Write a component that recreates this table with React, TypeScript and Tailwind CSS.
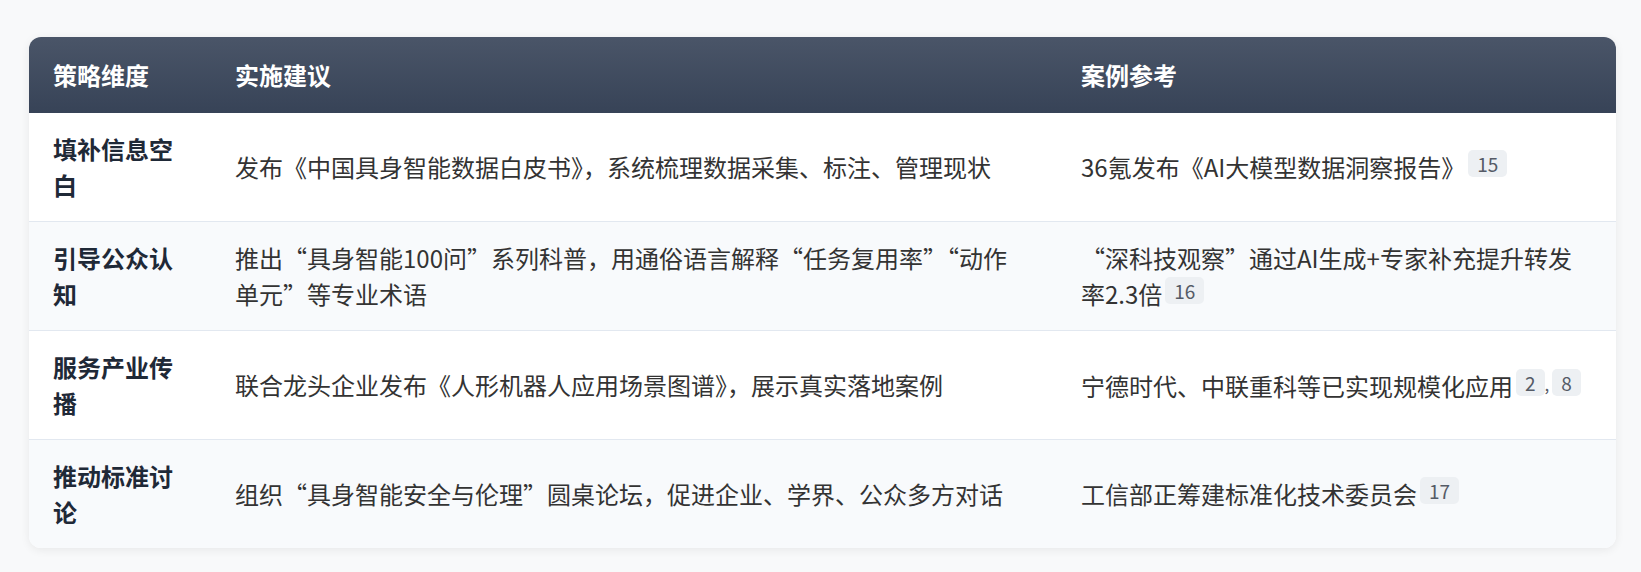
import { FC, ReactNode } from 'react';

type Row = {
  dimension: string;
  advice: string;
  example: ReactNode;
};

const Cite: FC<{ n: number }> = ({ n }) => (
  <span className="ml-[3px] inline-block rounded-[5px] bg-[#edf0f3] px-[9px] align-[5px] text-[19px] leading-[27px] text-[#555b66]">
    {n}
  </span>
);

const rows: Row[] = [
  {
    dimension: '填补信息空白',
    advice: '发布《中国具身智能数据白皮书》，系统梳理数据采集、标注、管理现状',
    example: (
      <>
        36氪发布《AI大模型数据洞察报告》
        <Cite n={15} />
      </>
    ),
  },
  {
    dimension: '引导公众认知',
    advice: '推出“具身智能100问”系列科普，用通俗语言解释“任务复用率”“动作单元”等专业术语',
    example: (
      <>
        “深科技观察”通过AI生成+专家补充提升转发率2.3倍
        <Cite n={16} />
      </>
    ),
  },
  {
    dimension: '服务产业传播',
    advice: '联合龙头企业发布《人形机器人应用场景图谱》，展示真实落地案例',
    example: (
      <>
        宁德时代、中联重科等已实现规模化应用
        <Cite n={2} />
        <span className="align-[5px] text-[17px] text-[#555b66]">,</span>
        <Cite n={8} />
      </>
    ),
  },
  {
    dimension: '推动标准讨论',
    advice: '组织“具身智能安全与伦理”圆桌论坛，促进企业、学界、公众多方对话',
    example: (
      <>
        工信部正筹建标准化技术委员会
        <Cite n={17} />
      </>
    ),
  },
];

const columns = ['策略维度', '实施建议', '案例参考'];

const App: FC = () => {
  return (
    <div className="min-h-[572px] w-full bg-[#f8f9fa] pl-[29px] pt-[37px] pb-[24px] font-['Noto_Sans_CJK_SC','Noto_Sans',sans-serif]">
      <div className="w-[1587px] overflow-hidden rounded-[12px] bg-white shadow-[0_2px_10px_rgba(0,0,0,0.07)]">
        <table className="w-full table-fixed border-collapse text-left text-[24px] leading-[36px]">
          <colgroup>
            <col className="w-[182px]" />
            <col className="w-[846px]" />
            <col className="w-[559px]" />
          </colgroup>
          <thead className="bg-gradient-to-b from-[#4a5568] to-[#374357] text-white">
            <tr>
              {columns.map((item, index) => (
                <th key={index} className="px-[24px] py-[20px] font-bold">
                  {item}
                </th>
              ))}
            </tr>
          </thead>
          <tbody>
            {rows.map((row, i) => (
              <tr
                key={i}
                className={
                  (i % 2 === 1 ? 'bg-[#f8fafc] ' : 'bg-white ') +
                  (i < rows.length - 1 ? 'border-b border-[#e2e8f0]' : '')
                }
              >
                <td className="px-[24px] py-[18px] align-middle font-bold text-[#1f2937]">
                  {row.dimension}
                </td>
                <td className="pl-[24px] pr-[32px] py-[18px] align-middle text-[#333]">
                  {row.advice}
                </td>
                <td className="px-[24px] py-[18px] align-middle text-[#333]">{row.example}</td>
              </tr>
            ))}
          </tbody>
        </table>
      </div>
    </div>
  );
};

export default App;
